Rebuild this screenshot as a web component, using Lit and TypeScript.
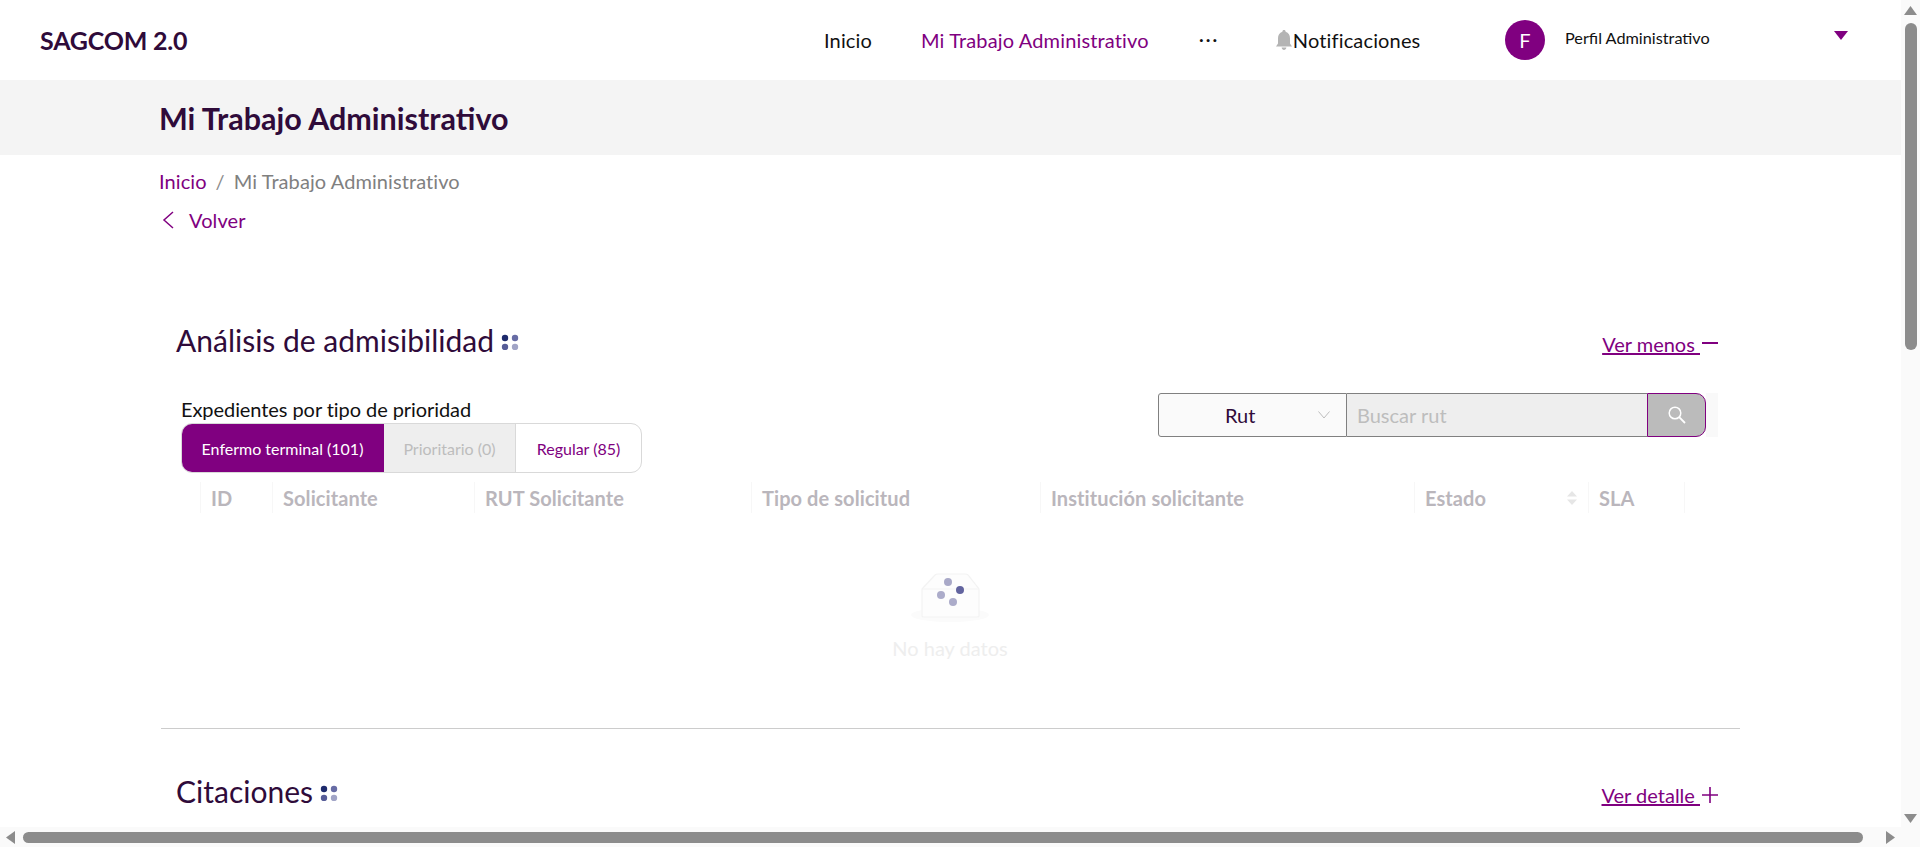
import { LitElement, css, html, svg } from "lit";
import { customElement } from "lit/decorators.js";

const COLUMNS = [
  { label: "ID" },
  { label: "Solicitante" },
  { label: "RUT Solicitante" },
  { label: "Tipo de solicitud" },
  { label: "Institución solicitante" },
  { label: "Estado", sort: true },
  { label: "SLA" },
];

const dots = html`<svg class="dots" width="18" height="16" viewBox="0 0 18 16">
  <circle cx="4" cy="4" r="3.2" fill="#1d2a6c"></circle>
  <circle cx="14" cy="4" r="3.2" fill="#676ca5"></circle>
  <circle cx="4" cy="13" r="3.2" fill="#565c97"></circle>
  <circle cx="14" cy="13" r="3.2" fill="#a1a4c6"></circle>
</svg>`;

const emptyBox = svg`
  <ellipse cx="40" cy="45" rx="39" ry="7" fill="#fbfbfb"></ellipse>
  <path d="M12 19 L25 5 Q26 4 28 4 L55 4 Q57 4 58 5 L69 19 L69 46 Q69 47 67 47 L14 47 Q12 47 12 46 Z" fill="#fdfdfd" stroke="#f3f3f3" stroke-width="1.2"></path>
  <path d="M12 19 L69 19" fill="none" stroke="#f3f3f3" stroke-width="1.2"></path>
  <circle cx="38" cy="12" r="4" fill="#a9a9c8"></circle>
  <circle cx="50" cy="20" r="4" fill="#62649f"></circle>
  <circle cx="31" cy="25" r="4" fill="#acacca"></circle>
  <circle cx="43" cy="32" r="4" fill="#acacca"></circle>
`;

@customElement("app-root")
export class AppRoot extends LitElement {
  render() {
    return html`
      <div class="viewport">
        <main class="page">
          <header class="topbar">
            <div class="logo">SAGCOM 2.0</div>
            <nav class="nav">
              <a class="nav-home">Inicio</a>
              <a class="nav-work">Mi Trabajo Administrativo</a>
              <span class="nav-more">···</span>
              <a class="nav-notif">
                <svg width="18" height="20" viewBox="0 0 18 20">
                  <path d="M9 0 C10 0 10.6 .7 10.6 1.7 C13.6 2.6 15 5 15 8.2 L15 13.5 L17 16.6 L1 16.6 L3 13.5 L3 8.2 C3 5 4.4 2.6 7.4 1.7 C7.4 .7 8 0 9 0 Z M6.6 17.6 L11.4 17.6 C11.2 19 10.2 20 9 20 C7.8 20 6.8 19 6.6 17.6 Z" fill="#b4b4b4"></path>
                </svg>
                Notificaciones
              </a>
            </nav>
            <div class="profile">
              <span class="avatar">F</span>
              <span class="profile-name">Perfil Administrativo</span>
              <svg class="caret" width="14" height="9" viewBox="0 0 14 9"><path d="M0 0 H14 L7 9 Z" fill="#800080"></path></svg>
            </div>
          </header>

          <div class="pagehead"><h1>Mi Trabajo Administrativo</h1></div>

          <div class="crumbs">
            <a>Inicio</a><span class="sep">/</span><span class="current">Mi Trabajo Administrativo</span>
          </div>
          <a class="back">
            <svg width="14" height="18" viewBox="0 0 14 18"><path d="M12 1 L3 9 L12 17" fill="none" stroke="#800080" stroke-width="1.5"></path></svg>
            Volver
          </a>

          <section class="section">
            <div class="section-head">
              <h2>Análisis de admisibilidad ${dots}</h2>
              <a class="toggle"><span>Ver menos </span><svg width="16" height="16" viewBox="0 0 16 16"><path d="M0 7 H16" stroke="#800080" stroke-width="2"></path></svg></a>
            </div>

            <div class="tools">
              <div class="tabs-wrap">
                <div class="tabs-label">Expedientes por tipo de prioridad</div>
                <div class="tabs">
                  <span class="tab active">Enfermo terminal (101)</span>
                  <span class="tab disabled">Prioritario (0)</span>
                  <span class="tab regular">Regular (85)</span>
                </div>
              </div>
              <div class="search">
                <div class="select">
                  <span>Rut</span>
                  <svg width="12" height="8" viewBox="0 0 12 8"><path d="M.5 .5 L6 7 L11.5 .5" fill="none" stroke="#bdbdbd"></path></svg>
                </div>
                <div class="input">Buscar rut</div>
                <div class="search-btn">
                  <svg width="20" height="20" viewBox="0 0 20 20">
                    <circle cx="8" cy="8" r="5.8" fill="none" stroke="#fff" stroke-width="1.5"></circle>
                    <path d="M12.2 12.2 L18 18" stroke="#fff" stroke-width="1.8"></path>
                  </svg>
                </div>
              </div>
            </div>

            <div class="thead">
              ${COLUMNS.map(
                (c) => html`<div class="th">
                  ${c.label}
                  ${c.sort
                    ? html`<svg class="sort" width="10" height="18" viewBox="0 0 10 18"><path d="M5 2 L10 7.5 H0 Z M5 16 L0 10.5 H10 Z" fill="#e6e6e6"></path></svg>`
                    : ""}
                </div>`
              )}
            </div>

            <div class="empty">
              <svg width="80" height="54" viewBox="0 0 80 54">${emptyBox}</svg>
              <div class="empty-text">No hay datos</div>
            </div>
          </section>

          <hr class="rule" />

          <section class="section next">
            <div class="section-head">
              <h2>Citaciones ${dots}</h2>
              <a class="toggle"><span>Ver detalle </span><svg width="16" height="16" viewBox="0 0 16 16"><path d="M0 8 H16 M8 0 V16" stroke="#800080" stroke-width="1.6"></path></svg></a>
            </div>
          </section>
        </main>

        <div class="vbar">
          <svg width="13" height="9" viewBox="0 0 13 9"><path d="M6.5 0 L13 9 H0 Z" fill="#8c8c8c"></path></svg>
          <div class="vthumb"></div>
          <svg class="down" width="13" height="9" viewBox="0 0 13 9"><path d="M0 0 H13 L6.5 9 Z" fill="#8c8c8c"></path></svg>
        </div>
        <div class="hbar">
          <svg width="9" height="13" viewBox="0 0 9 13"><path d="M0 6.5 L9 0 V13 Z" fill="#8c8c8c"></path></svg>
          <div class="hthumb"></div>
          <svg width="9" height="13" viewBox="0 0 9 13"><path d="M9 6.5 L0 0 V13 Z" fill="#8c8c8c"></path></svg>
        </div>
        <div class="corner"></div>
      </div>
    `;
  }

  static styles = css`
    :host {
      display: block;
      font-family: Lato, "Noto Sans", sans-serif;
      color: #111;
    }

    .viewport {
      display: grid;
      grid-template-columns: 1901px 19px;
      grid-template-rows: 827px 20px;
      width: 1920px;
      height: 847px;
      overflow: hidden;
      background: #fff;
    }

    .page {
      overflow: hidden;
      min-width: 0;
    }

    .topbar {
      display: flex;
      align-items: center;
      height: 80px;
      padding-left: 40px;
      box-sizing: border-box;
    }

    .logo {
      width: 784px;
      font-size: 25px;
      font-weight: 700;
      letter-spacing: -0.2px;
      color: #2f0b3a;
    }

    .nav {
      display: flex;
      align-items: center;
      width: 681px;
      font-size: 20px;
      letter-spacing: 0.15px;
    }

    .nav-home {
      margin-right: 49px;
    }

    .nav-work {
      color: #800080;
      margin-right: 50px;
    }

    .nav-more {
      letter-spacing: 1.5px;
      margin-right: 56px;
      position: relative;
      top: -2px;
    }

    .nav-notif {
      display: flex;
      align-items: center;
    }

    .profile {
      display: flex;
      align-items: center;
    }

    .avatar {
      display: flex;
      align-items: center;
      justify-content: center;
      width: 40px;
      height: 40px;
      border-radius: 50%;
      background: #800080;
      color: #fff;
      font-size: 20px;
    }

    .profile-name {
      width: 269px;
      margin-left: 20px;
      font-size: 16.25px;
      margin-top: -5px;
    }

    .caret {
      margin-top: -9px;
    }

    .pagehead {
      display: flex;
      align-items: center;
      height: 75px;
      padding-left: 159px;
      background: #f4f4f4;
    }

    h1 {
      margin: 0;
      font-size: 30.5px;
      font-weight: 700;
      color: #2f0b3a;
    }

    .crumbs {
      margin: 13px 0 0 159px;
      line-height: 26px;
      font-size: 20px;
      letter-spacing: 0.08px;
      color: #800080;
    }

    .sep {
      margin: 0 9px;
      color: #8b8b8b;
    }

    .current {
      color: #808080;
    }

    .back {
      display: flex;
      align-items: center;
      gap: 14px;
      margin: 13px 0 0 161px;
      line-height: 26px;
      font-size: 20px;
      letter-spacing: 0.1px;
      color: #800080;
    }

    .section {
      width: 1579px;
      margin: 87px 0 0 161px;
      box-sizing: border-box;
      padding: 0 22px 0 15px;
    }

    .section-head {
      display: flex;
      align-items: center;
      justify-content: space-between;
      height: 40px;
    }

    h2 {
      display: flex;
      align-items: center;
      gap: 7px;
      margin: 0;
      font-size: 30px;
      font-weight: 400;
      color: #2f0b3a;
    }

    .dots {
      margin-top: 3px;
    }

    .toggle {
      display: flex;
      align-items: center;
      gap: 2px;
      font-size: 20px;
      color: #800080;
      margin-top: 8px;
    }

    .toggle span {
      text-decoration: underline;
      white-space: pre;
    }

    .tools {
      display: flex;
      justify-content: space-between;
      align-items: flex-start;
      margin: 33px 0 0 5px;
    }

    .tabs-label {
      padding-top: 2px;
      line-height: 28px;
      font-size: 20px;
      letter-spacing: -0.07px;
    }

    .tabs {
      display: grid;
      grid-template-columns: 202px 132px 125px;
      height: 50px;
      box-sizing: border-box;
      border: 1px solid #d9d9d9;
      border-radius: 11px;
      font-size: 16px;
      overflow: hidden;
    }

    .tab {
      display: flex;
      align-items: center;
      justify-content: center;
    }

    .active {
      background: #800080;
      color: #fff;
      margin: -1px 0 -1px -1px;
    }

    .disabled {
      background: #eee;
      color: #bdbdbd;
      border-right: 1px solid #d9d9d9;
    }

    .regular {
      color: #800080;
    }

    .search {
      display: grid;
      grid-template-columns: 189px 300px 59px;
      height: 44px;
      padding-right: 12px;
      background: linear-gradient(to left, #f9f9f9 12px, transparent 12px);
      font-size: 20px;
    }

    .select {
      display: flex;
      align-items: center;
      justify-content: space-between;
      padding: 0 16px 0 66px;
      box-sizing: border-box;
      border: 1px solid #808080;
      border-radius: 3px 0 0 3px;
      background: #fafafa;
      color: #2f0b3a;
    }

    .input {
      display: flex;
      align-items: center;
      padding-left: 10px;
      box-sizing: border-box;
      border-top: 1px solid #808080;
      border-bottom: 1px solid #808080;
      background: #eee;
      color: #bdbdbd;
    }

    .search-btn {
      display: flex;
      align-items: center;
      justify-content: center;
      box-sizing: border-box;
      border: 1px solid #800080;
      border-radius: 0 10px 10px 0;
      background: #bbb;
    }

    .thead {
      display: grid;
      grid-template-columns: 72px 202px 277px 289px 374px 174px 96px;
      height: 31px;
      margin: 9px 0 0 24px;
      width: 1484px;
      border-right: 1px solid #f7f7f7;
    }

    .th {
      display: flex;
      align-items: center;
      justify-content: space-between;
      padding: 0 12px 0 10px;
      border-left: 1px solid #f7f7f7;
      font-size: 20px;
      font-weight: 700;
      letter-spacing: 0.08px;
      color: #bab6bc;
      white-space: nowrap;
    }

    .sort {
      margin-right: -1px;
    }

    .empty {
      display: flex;
      flex-direction: column;
      align-items: center;
      margin: 57px 0 0 6px;
      height: 158px;
      box-sizing: border-box;
    }

    .empty-text {
      margin-top: 11px;
      font-size: 20px;
      color: #eeeeee;
      line-height: 26px;
    }

    .rule {
      width: 1579px;
      margin: 0 0 0 161px;
      border: 0;
      border-top: 1px solid #cccccc;
    }

    .next {
      margin-top: 42px;
    }

    .vbar {
      display: flex;
      flex-direction: column;
      align-items: center;
      padding: 6px 0 4px;
      box-sizing: border-box;
      background: #fafafa;
    }

    .vthumb {
      width: 12px;
      height: 327px;
      margin-top: 8px;
      border-radius: 6px;
      background: #8c8c8c;
    }

    .down {
      margin-top: auto;
    }

    .hbar {
      display: flex;
      align-items: center;
      padding: 0 6px;
      background: #fafafa;
    }

    .hthumb {
      width: 1840px;
      height: 11px;
      margin: 0 auto 0 8px;
      border-radius: 6px;
      background: #8c8c8c;
    }

    .corner {
      background: #fafafa;
    }
  `;
}

declare global {
  interface HTMLElementTagNameMap {
    "app-root": AppRoot;
  }
}
